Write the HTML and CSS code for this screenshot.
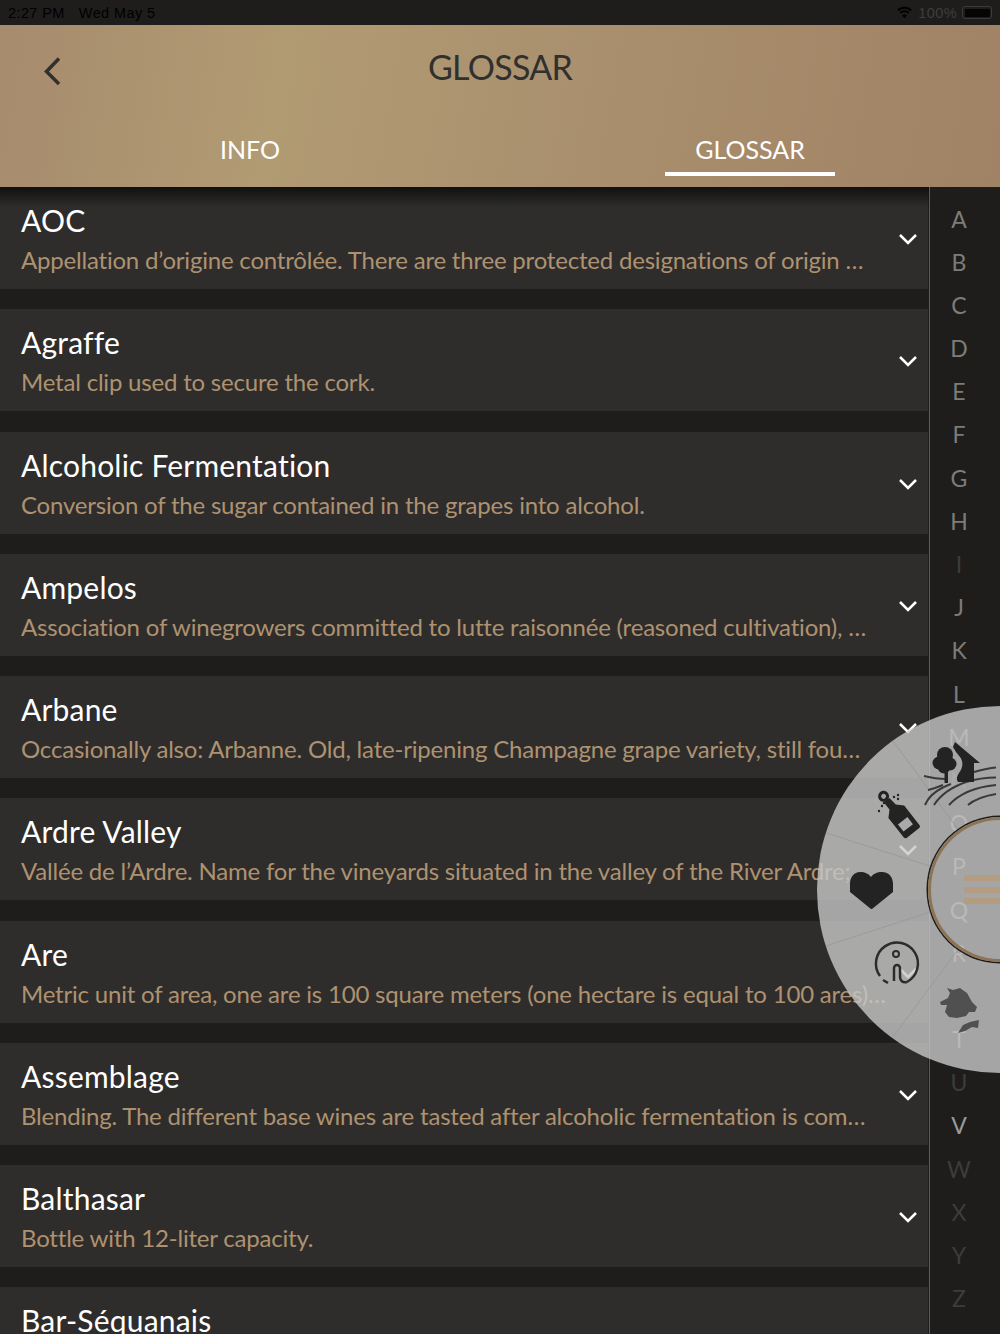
FILE: index.html
```html
<!DOCTYPE html>
<html lang="en">

<head>
    <meta charset="UTF-8">
    <meta name="viewport" content="width=device-width, initial-scale=1.0">
    <title>Glossar</title>
    <link rel="stylesheet" href="styles.css">
</head>

<body>
    <div class="status-bar">
        <div class="status-left">
            <span>2:27 PM</span>
            <span>Wed May 5</span>
        </div>
        <div class="status-right">
            <svg class="wifi" width="17" height="13" viewBox="0 0 17 13">
                <path d="M8.5 2.8c2.3 0 4.4.9 6 2.4l1.3-1.4C13.9 2 11.300 .8 8.500 .8S3.100 2 1.200 3.800l1.300 1.400c1.600-1.500 3.700-2.400 6-2.400z" />
                <path d="M8.500 6.300c1.400 0 2.600.5 3.600 1.400l1.300-1.400C12.100 5.100 10.400 4.300 8.500 4.300s-3.600.8-4.900 2l1.300 1.400c1-.9 2.200-1.400 3.600-1.400z" />
                <path d="M8.500 12.200l2.500-2.700c-.7-.6-1.600-1-2.500-1s-1.800.4-2.500 1z" />
            </svg>
            <span>100%</span>
            <span class="battery"><span class="battery-fill"></span></span>
        </div>
    </div>

    <header class="header">
        <div class="title-row">
            <svg class="back" width="18" height="30" viewBox="0 0 18 30">
                <path d="M16 2.500L3.500 15.500 16 28" />
            </svg>
            <h1>GLOSSAR</h1>
        </div>
        <nav class="tabs">
            <div class="tab"><span class="tab-label">INFO</span></div>
            <div class="tab active"><span class="tab-label">GLOSSAR</span></div>
        </nav>
    </header>

    <div class="content">
        <div class="list">
            <div class="item">
                <div class="item-text">
                    <h3>AOC</h3>
                    <p>Appellation d’origine contrôlée. There are three protected designations of origin <span class="more">…</span></p>
                </div>
                <svg class="chevron" viewBox="0 0 20 12"><path d="M2 2l8 8 8-8" /></svg>
            </div>
            <div class="item">
                <div class="item-text">
                    <h3>Agraffe</h3>
                    <p>Metal clip used to secure the cork.</p>
                </div>
                <svg class="chevron" viewBox="0 0 20 12"><path d="M2 2l8 8 8-8" /></svg>
            </div>
            <div class="item">
                <div class="item-text">
                    <h3>Alcoholic Fermentation</h3>
                    <p>Conversion of the sugar contained in the grapes into alcohol.</p>
                </div>
                <svg class="chevron" viewBox="0 0 20 12"><path d="M2 2l8 8 8-8" /></svg>
            </div>
            <div class="item">
                <div class="item-text">
                    <h3>Ampelos</h3>
                    <p>Association of winegrowers committed to lutte raisonnée (reasoned cultivation), <span class="more">…</span></p>
                </div>
                <svg class="chevron" viewBox="0 0 20 12"><path d="M2 2l8 8 8-8" /></svg>
            </div>
            <div class="item">
                <div class="item-text">
                    <h3>Arbane</h3>
                    <p>Occasionally also: Arbanne. Old, late-ripening Champagne grape variety, still fou<span class="more">…</span></p>
                </div>
                <svg class="chevron" viewBox="0 0 20 12"><path d="M2 2l8 8 8-8" /></svg>
            </div>
            <div class="item">
                <div class="item-text">
                    <h3>Ardre Valley</h3>
                    <p>Vallée de l’Ardre. Name for the vineyards situated in the valley of the River Ardre; <span class="more">…</span></p>
                </div>
                <svg class="chevron" viewBox="0 0 20 12"><path d="M2 2l8 8 8-8" /></svg>
            </div>
            <div class="item">
                <div class="item-text">
                    <h3>Are</h3>
                    <p>Metric unit of area, one are is 100 square meters (one hectare is equal to 100 ares)<span class="more">…</span></p>
                </div>
                <svg class="chevron" viewBox="0 0 20 12"><path d="M2 2l8 8 8-8" /></svg>
            </div>
            <div class="item">
                <div class="item-text">
                    <h3>Assemblage</h3>
                    <p>Blending. The different base wines are tasted after alcoholic fermentation is com<span class="more">…</span></p>
                </div>
                <svg class="chevron" viewBox="0 0 20 12"><path d="M2 2l8 8 8-8" /></svg>
            </div>
            <div class="item">
                <div class="item-text">
                    <h3>Balthasar</h3>
                    <p>Bottle with 12-liter capacity.</p>
                </div>
                <svg class="chevron" viewBox="0 0 20 12"><path d="M2 2l8 8 8-8" /></svg>
            </div>
            <div class="item">
                <div class="item-text">
                    <h3>Bar-Séquanais</h3>
                </div>
            </div>
        </div>

        <div class="alphabet">
            <span>A</span><span>B</span><span>C</span><span>D</span><span>E</span><span>F</span><span>G</span>
            <span>H</span><span class="off">I</span><span>J</span><span>K</span><span>L</span><span>M</span>
            <span class="off">N</span><span>O</span><span>P</span><span>Q</span><span>R</span>
            <span class="off">S</span><span>T</span><span class="off">U</span><span class="on">V</span>
            <span class="off">W</span><span class="off">X</span><span class="off">Y</span><span class="off">Z</span>
        </div>
    </div>

    <div class="wheel">
        <svg class="wheel-icons" width="184" height="368" viewBox="817 706 184 368">
            <g class="spokes">
                <path d="M893 741L960 832" />
                <path d="M826 833L930 866" />
                <path d="M826 946L930 912" />
                <path d="M893 1037L960 947" />
            </g>

            <!-- vineyard -->
            <g class="hills">
                <path d="M924 776c8 2 14 3 22 3" />
                <path d="M974 772c7-2 15-4 22-4.500" />
                <path d="M928 790c5-1 10-3 15-5" />
                <path d="M925 805c3-7 9-13 17-17 3-1.500 6-3 9-4" />
                <path d="M934 805c7-11 18-18 32-23 10-3 20-4.500 30-4.500" />
                <path d="M949 805c10-11 26-18 47-20" />
                <path d="M968 805c7-6 16-9 28-11" />
            </g>
            <g class="icon">
                <circle cx="945" cy="755" r="8" />
                <circle cx="939" cy="763" r="6.500" />
                <circle cx="950" cy="764" r="6.500" />
                <circle cx="944" cy="767" r="6.500" />
                <rect x="944.500" y="770" width="3.500" height="13" />
                <path d="M955 742l25 21h-6v19h-16c-2-3-1-6 1-9 3-4 4-8 3-12-1-4-4-6-6-9l-3-5z" />
            </g>

            <!-- bottle -->
            <g transform="rotate(-38 899 816)">
                <circle cx="899" cy="791" r="4" class="bottle-cap" />
                <path class="icon" d="M895.500 796h7l1 9 6 6v25c0 1-1 2-2 2h-16c-1 0-2-1-2-2v-25l6-6z" />
                <rect x="893" y="822" width="12" height="9" class="bottle-label" />
            </g>
            <g class="dots">
                <circle cx="894" cy="797" r="1.200" /><circle cx="898" cy="795" r="1.200" /><circle cx="898" cy="799" r="1.200" />
                <circle cx="879" cy="811" r="1.200" /><circle cx="882" cy="806" r="1.200" /><circle cx="884" cy="803" r="1.200" />
            </g>

            <!-- favourite -->
            <path class="icon" d="M860 872c5 0 9 2 11 5 2-3 6-5 11-5 7 0 11 5 11 12v8l-21 17-1 0-21-17v-8c0-7 4-12 10-12z" />

            <!-- info -->
            <g class="info">
                <path d="M880 976A21 21 0 1 1 907 982" />
                <path d="M883 980l5 3" />
                <circle cx="896" cy="954" r="3" />
                <path d="M894 981V968a3 3 0 0 1 6 0v9c0 4 3 6 7 5" />
            </g>

            <!-- map -->
            <g class="map">
                <path d="M947 988l6 2 7-2 7 5 5 9 5 5-2 5-6 0-3 4-9 2-8-1-4-5 2-7-6 0-1-3 8-4 2-5z" />
                <path d="M958 1033l5-8 7-3 9-2-1 8-6-1-7 4z" />
            </g>
        </svg>
        <div class="wheel-center">
            <span class="bar"></span>
            <span class="bar"></span>
            <span class="bar"></span>
        </div>
    </div>
</body>

</html>
```

FILE: styles.css
```css
html,
body {
    margin: 0;
    padding: 0;
    height: 1334px;
    overflow: hidden;
}

body {
    position: relative;
    display: flex;
    flex-direction: column;
    background-color: #1e1d1c;
    font-family: Lato, "Liberation Sans", sans-serif;
}

.status-bar {
    height: 25px;
    flex-shrink: 0;
    display: flex;
    justify-content: space-between;
    align-items: center;
    padding: 0 8px;
    box-sizing: border-box;
    background-color: #1e1d1c;
    color: #000;
    font-family: "Liberation Sans", sans-serif;
    font-size: 14.5px;
    letter-spacing: 0.4px;
}

.status-left {
    display: flex;
    gap: 14px;
}

.status-right {
    display: flex;
    align-items: center;
    gap: 5px;
    color: #3e3e3d;
}

.wifi {
    fill: #000;
}

.battery {
    display: block;
    width: 30px;
    height: 13px;
    padding: 1.500px;
    box-sizing: border-box;
    border: 1px solid #3a3a39;
    border-radius: 3px;
}

.battery-fill {
    display: block;
    height: 100%;
    background-color: #050505;
    border-radius: 1px;
}

.header {
    height: 162px;
    flex-shrink: 0;
    box-sizing: border-box;
    display: flex;
    flex-direction: column;
    background: linear-gradient(100deg, #a68b6d 0%, #b19b73 28%, #a98f6e 60%, #a08264 100%);
    position: relative;
    z-index: 1;
}

.title-row {
    position: relative;
    height: 84px;
    display: flex;
    justify-content: center;
    align-items: center;
}

.title-row h1 {
    margin: 0 0 2px;
    font-size: 34px;
    font-weight: 400;
    color: #30302f;
    letter-spacing: -0.7px;
}

.back {
    position: absolute;
    left: 43px;
    top: 31px;
    fill: none;
    stroke: #30302f;
    stroke-width: 3.500;
}

.tabs {
    display: flex;
    flex: 1;
}

.tab {
    flex: 1;
    display: flex;
    justify-content: center;
    padding-top: 22px;
}

.tab-label {
    display: block;
    height: 44.500px;
    padding: 0 30px;
    font-size: 25px;
    line-height: 36px;
    color: #fff;
    box-sizing: border-box;
}

.active .tab-label {
    border-bottom: 4px solid #fff;
}

.content {
    flex: 1;
    display: flex;
    min-height: 0;
    position: relative;
}

.content::before {
    content: "";
    position: absolute;
    left: 0;
    right: 71px;
    top: 0;
    height: 20px;
    background: linear-gradient(#101010, rgba(16, 16, 16, 0));
}

.list {
    width: 928px;
    flex-shrink: 0;
    display: flex;
    flex-direction: column;
    gap: 20.25px;
}

.item {
    height: 102px;
    flex-shrink: 0;
    display: flex;
    align-items: flex-start;
    justify-content: space-between;
    box-sizing: border-box;
    padding: 13px 10px 0 21px;
    background-color: #2e2d2c;
}

.item-text {
    flex: 1;
    min-width: 0;
}

.item-text h3 {
    margin: 0;
    font-size: 30px;
    font-weight: 400;
    line-height: 40px;
    color: #fff;
    letter-spacing: 0.2px;
}

.item-text p {
    margin: 1px 0 0;
    font-size: 24px;
    line-height: 38px;
    color: #ae9270;
    white-space: nowrap;
    letter-spacing: -0.2px;
}

.more {
    letter-spacing: 2px;
}

.chevron {
    width: 20px;
    height: 12px;
    flex-shrink: 0;
    margin-top: 33px;
    fill: none;
    stroke: #fff;
    stroke-width: 2.500;
}

.alphabet {
    flex: 1;
    border-left: 1px solid #5b5b5a;
    margin-left: 1px;
    display: flex;
    flex-direction: column;
    align-items: center;
    padding: 10.500px 12px 0 0;
    font-size: 23px;
    line-height: 43.2px;
    color: #7c7c7b;
}

.alphabet span {
    display: block;
    height: 43.2px;
}

.alphabet .off {
    color: #3c3c3b;
}

.alphabet .on {
    color: #9a9a99;
}

.wheel {
    position: absolute;
    left: 817px;
    top: 706px;
    width: 183px;
    height: 367px;
    border-radius: 184px 0 0 184px;
    background-color: rgba(200, 200, 200, 0.8);
    z-index: 2;
    overflow: hidden;
}

.wheel-icons {
    position: absolute;
    left: 0;
    top: 0;
}

.spokes path {
    fill: none;
    stroke: #979797;
    stroke-width: 0.8;
}

.icon,
.dots {
    fill: #232323;
}

.bottle-cap {
    fill: none;
    stroke: #232323;
    stroke-width: 3;
}

.bottle-label {
    fill: #aaa;
}

.hills path {
    fill: none;
    stroke: #3a3a3a;
    stroke-width: 2;
}

.info path {
    fill: none;
    stroke: #2c2c2c;
    stroke-width: 2.500;
}

.info circle {
    fill: none;
    stroke: #2c2c2c;
    stroke-width: 2;
}

.map {
    fill: #505050;
}

.wheel-center {
    position: absolute;
    left: 111px;
    top: 111px;
    width: 72px;
    height: 145px;
    box-sizing: border-box;
    border: 3.500px solid #8e7456;
    border-right: none;
    border-radius: 73px 0 0 73px;
    box-shadow: 0 0 0 1.500px #1c1c1c;
    display: flex;
    flex-direction: column;
    justify-content: center;
    align-items: flex-end;
    gap: 5.500px;
}

.bar {
    display: block;
    width: 36px;
    height: 6px;
    background-color: #b39c80;
    border-radius: 2px 0 0 2px;
}
```
